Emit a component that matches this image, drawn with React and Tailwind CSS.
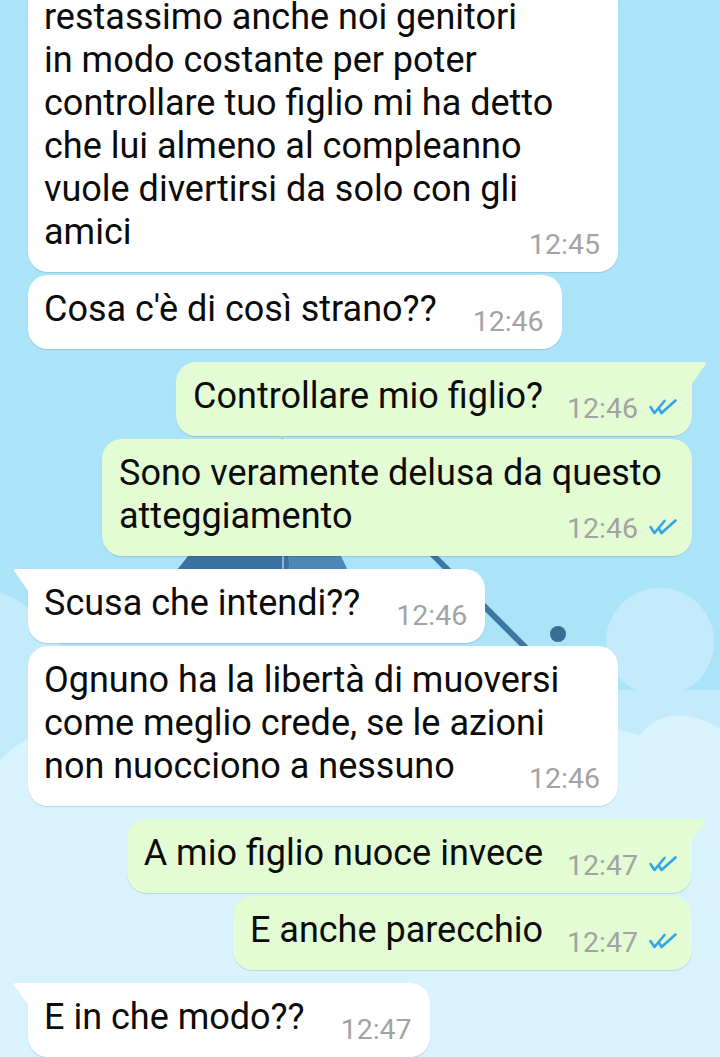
import React from 'react';

const messages = [
  { id: 1, out: false, wide: true, lines: ['restassimo anche noi genitori', 'in modo costante per poter', 'controllare tuo figlio mi ha detto', 'che lui almeno al compleanno', 'vuole divertirsi da solo con gli', 'amici'], time: '12:45' },
  { id: 2, out: false, lines: ["Cosa c'è di così strano??"], time: '12:46' },
  { id: 3, out: true, tail: true, lines: ['Controllare mio figlio?'], time: '12:46' },
  { id: 4, out: true, wide: true, lines: ['Sono veramente delusa da questo', 'atteggiamento'], time: '12:46' },
  { id: 5, out: false, tail: true, lines: ['Scusa che intendi??'], time: '12:46' },
  { id: 6, out: false, wide: true, lines: ['Ognuno ha la libertà di muoversi', 'come meglio crede, se le azioni', 'non nuocciono a nessuno'], time: '12:46' },
  { id: 7, out: true, tail: true, lines: ['A mio figlio nuoce invece'], time: '12:47' },
  { id: 8, out: true, lines: ['E anche parecchio'], time: '12:47' },
  { id: 9, out: false, tail: true, lines: ['E in che modo??'], time: '12:47' },
];

// read receipt double tick
const Ticks = () => (
  <svg width="30" height="16" viewBox="0 0 30 16" fill="none" stroke="#2fa6e6" strokeWidth="2.6" strokeLinecap="round" strokeLinejoin="round">
    <path d="M2.5 8 L6.5 14 L16.5 2" />
    <path d="M11.5 10.5 L13.5 14 L27.5 1.5" />
  </svg>
);

const Wallpaper = () => (
  <svg className="absolute inset-0" width="720" height="1057" viewBox="0 0 720 1057">
    <rect width="720" height="1057" fill="#abe4f9" />
    {/* clouds */}
    <g fill="#c3ebfb">
      <circle cx="660" cy="642" r="54" />
      <circle cx="-40" cy="700" r="115" />
      <rect x="0" y="690" width="720" height="367" />
    </g>
    <g fill="#d8f3fd">
      <path d="M0 760 Q60 700 140 740 Q260 720 400 745 Q520 700 640 735 Q668 700 720 728 L720 1057 L0 1057 Z" />
    </g>
    {/* kite */}
    <path d="M283 437 L165 585 L290 585 Z" fill="#3b71a0" />
    <path d="M283 437 L290 585 L355 585 Z" fill="#4c88b6" />
    <line x1="283" y1="430" x2="283" y2="585" stroke="#dceef7" strokeWidth="1.5" opacity="0.7" />
    <line x1="418" y1="540" x2="540" y2="662" stroke="#3d77a2" strokeWidth="6" />
    <circle cx="558" cy="634" r="8" fill="#396e93" />
  </svg>
);

const Tail = ({ out, color }) => (
  <svg
    className={`absolute top-0 ${out ? 'right-[-15px]' : 'left-[-15px]'}`}
    width="16"
    height="24"
    viewBox="0 0 16 24"
  >
    {out ? (
      <path d="M0 0 H13 Q16 0 14.5 2.5 L0 23 Z" fill={color} />
    ) : (
      <path d="M16 0 H3 Q0 0 1.5 2.5 L16 23 Z" fill={color} />
    )}
  </svg>
);

const Bubble = ({ msg, spacing }) => {
  const body = msg.lines.slice(0, -1);
  const last = msg.lines[msg.lines.length - 1];
  const color = msg.out ? '#e3fcd4' : '#ffffff';

  return (
    <div
      className={`relative flex flex-col rounded-[20px] pt-[13px] pb-[11px] shadow-[0_1px_1px_rgba(0,0,0,0.13)] ${
        msg.out ? 'self-end mr-[28px] bg-[#e3fcd4] pl-[17px] pr-[14px]' : 'self-start ml-[28px] bg-white pl-[16px] pr-[18px]'
      } ${msg.tail ? (msg.out ? 'rounded-tr-none' : 'rounded-tl-none') : ''} ${msg.wide ? 'w-[590px]' : ''} ${spacing}`}
    >
      {msg.tail && <Tail out={msg.out} color={color} />}
      {body.map((line) => (
        <div key={line} className="leading-[43px] whitespace-nowrap">{line}</div>
      ))}
      <div className="flex justify-between">
        <span className="leading-[43px] whitespace-nowrap">{last}</span>
        <span className={`mt-[17px] flex items-center text-[28.5px] leading-[33px] text-[#a3a3a3] ${msg.out ? 'ml-[24px]' : 'ml-[36px]'}`}>
          {msg.time}
          {msg.out && (
            <span className="ml-[10px] mt-[-3px] flex">
              <Ticks />
            </span>
          )}
        </span>
      </div>
    </div>
  );
};

export default function App() {
  return (
    <div
      className="relative w-[720px] h-[1057px] overflow-hidden text-[36px] text-[#0b0b0b]"
      style={{ fontFamily: 'Roboto, "Noto Sans", sans-serif' }}
    >
      <Wallpaper />
      <div className="relative flex flex-col mt-[-17px]">
        {messages.map((msg, i) => {
          const prev = messages[i - 1];
          const spacing = !prev ? '' : prev.out === msg.out ? 'mt-[3px]' : 'mt-[13px]';
          return <Bubble key={msg.id} msg={msg} spacing={spacing} />;
        })}
      </div>
    </div>
  );
}
